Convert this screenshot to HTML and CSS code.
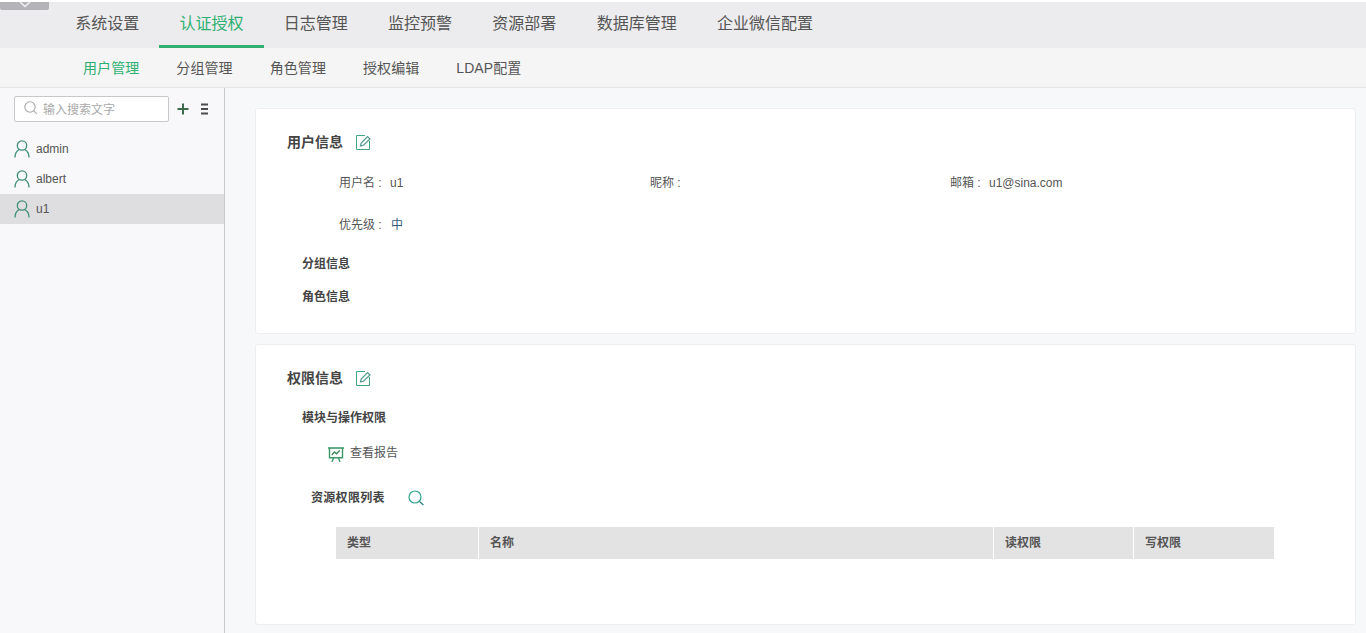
FILE: index.html
```html
<!DOCTYPE html>
<html lang="zh">
<head>
<meta charset="utf-8">
<title>用户管理</title>
<link rel="stylesheet" href="styles.css">
</head>
<body>
<svg class="defs" width="0" height="0">
  <defs>
    <symbol id="user" viewBox="0 0 16 18"><circle cx="8" cy="5.500" r="4.700" fill="none" stroke="#3f8f72" stroke-width="1.300"/><path d="M1 17.500c0-4 2-6.800 4.300-8M15 17.500c0-4-2-6.800-4.300-8" fill="none" stroke="#3f8f72" stroke-width="1.300"/></symbol>
    <symbol id="edit" viewBox="0 0 15 15"><path d="M9 .5H.5v14h13V6" fill="none" stroke="#3fa67e" stroke-width="1"/><path d="M4.500 11 5.200 8 11.500 1.500 14 4 7.500 10.300Z" fill="none" stroke="#4f9a8e" stroke-width="1.200"/></symbol>
  </defs>
</svg>
<div class="handle"><svg width="18" height="6" viewBox="0 0 18 6"><path d="M4 0 9 4.500 14 0" fill="none" stroke="#f0f0f0" stroke-width="1.500"/></svg></div>
<header class="topnav">
  <a class="tab">系统设置</a><a class="tab active">认证授权</a><a class="tab">日志管理</a><a class="tab">监控预警</a><a class="tab">资源部署</a><a class="tab">数据库管理</a><a class="tab">企业微信配置</a>
</header>
<nav class="subnav">
  <a class="sub active">用户管理</a><a class="sub">分组管理</a><a class="sub">角色管理</a><a class="sub">授权编辑</a><a class="sub">LDAP配置</a>
</nav>
<div class="body">
  <aside class="side">
    <div class="tools">
      <div class="search">
        <svg width="14" height="14" viewBox="0 0 14 14"><circle cx="6" cy="6" r="5.200" fill="none" stroke="#a9a9a9" stroke-width="1.100"/><path d="M9.800 9.800 12.800 12.800" stroke="#a9a9a9" stroke-width="1.100"/></svg>
        <span>输入搜索文字</span>
      </div>
      <svg class="plus" width="12" height="12" viewBox="0 0 12 12"><path d="M6 .5v11M.5 6h11" stroke="#3b6b4a" stroke-width="2"/></svg>
      <svg class="more" width="7" height="12" viewBox="0 0 7 12"><path d="M0 1.500h7M0 6h7M0 10.500h7" stroke="#4c4c4c" stroke-width="2.200"/></svg>
    </div>
    <ul class="users">
      <li><svg width="16" height="18"><use href="#user"/></svg>admin</li>
      <li><svg width="16" height="18"><use href="#user"/></svg>albert</li>
      <li class="sel"><svg width="16" height="18"><use href="#user"/></svg>u1</li>
    </ul>
  </aside>
  <main class="main">
    <section class="card one">
      <h2>用户信息<svg width="15" height="15"><use href="#edit"/></svg></h2>
      <div class="fields">
        <div class="f"><span class="k">用户名 :</span><span class="v">u1</span></div>
        <div class="f"><span class="k">昵称 :</span></div>
        <div class="f"><span class="k">邮箱 :</span><span class="v">u1@sina.com</span></div>
        <div class="f"><span class="k">优先级 :</span><span class="v blue">中</span></div>
      </div>
      <h3 class="g1">分组信息</h3>
      <h3 class="g2">角色信息</h3>
    </section>
    <section class="card two">
      <h2>权限信息<svg width="15" height="15"><use href="#edit"/></svg></h2>
      <h3 class="g3">模块与操作权限</h3>
      <div class="report">
        <svg width="16" height="15" viewBox="0 0 16 15"><path d="M0 1h16" stroke="#3c9a68" stroke-width="1.600"/><path d="M1.500 1v9.700h13V1" fill="none" stroke="#3c9a68" stroke-width="1.400"/><path d="M3.800 8 6.500 5 8.500 6.800 11.800 3.500" fill="none" stroke="#3c8a5c" stroke-width="1.300"/><path d="M5.500 11 4 15M10.500 11 12 15" stroke="#3c9a68" stroke-width="1.400"/></svg>
        <span>查看报告</span>
      </div>
      <div class="reslist"><h3>资源权限列表</h3><svg width="17" height="16" viewBox="0 0 17 16"><circle cx="7" cy="7" r="6" fill="none" stroke="#2fa58c" stroke-width="1.200"/><path d="M11.500 11.500 15.500 15" stroke="#2f7f86" stroke-width="1.200"/></svg></div>
      <div class="thead"><div class="c1">类型</div><div class="c2">名称</div><div class="c3">读权限</div><div class="c4">写权限</div></div>
    </section>
  </main>
</div>
</body>
</html>
```
FILE: styles.css
```css
* { box-sizing: border-box; }
html, body { margin: 0; height: 633px; overflow: hidden; }
body { font-family: "Liberation Sans", "Noto Sans CJK SC", sans-serif; color: #555; background: #f7f8fa; position: relative; }
.defs { position: absolute; }
.handle { position: absolute; left: 0; top: 2px; width: 49px; height: 8px; background: #b4b3b8; border-radius: 0 0 2px 2px; display: flex; justify-content: center; z-index: 2; }
.topnav { height: 48px; background: #ececee; padding-left: 55px; display: flex; border-top: 2px solid #fff; }
.tab { padding: 0 20.150px; line-height: 43px; font-size: 16px; color: #555; height: 46px; border-bottom: 3px solid transparent; white-space: nowrap; }
.tab.active { color: #2fb072; border-bottom-color: #2fb072; }
.subnav { height: 40px; background: #f5f5f6; border-bottom: 1px solid #e4e4e6; padding-left: 83px; display: flex; gap: 37px; }
.sub { font-size: 14px; letter-spacing: .08px; line-height: 40px; color: #555; }
.sub.active { color: #2fb072; }
.body { display: flex; height: 545px; }
.side { width: 225px; border-right: 1px solid #c9c9cc; background: #f8f8fb; padding-top: 8px; }
.tools { display: flex; align-items: center; padding-left: 14px; height: 26px; }
.search { width: 155px; height: 26px; border: 1px solid #c8c8c8; border-radius: 2px; background: #fff; display: flex; align-items: center; padding: 0 0 2px 9px; gap: 5px; font-size: 12px; color: #aaa; }
.plus { margin-left: 8px; }
.more { margin-left: 12px; }
.users { list-style: none; margin: 12px 0 0; padding: 0; }
.users li { height: 30px; display: flex; align-items: center; padding-left: 14px; gap: 6px; font-size: 12px; color: #555; }
.users li.sel { background: #dedee0; }
.main { flex: 1; padding: 20px 10px 0 30px; display: flex; flex-direction: column; gap: 10px; }
.card { background: #fff; border: 1px solid #eeeef0; border-radius: 3px; padding-left: 31px; }
.card.one { height: 226px; padding-top: 24px; }
.card.two { height: 281px; padding-top: 24px; }
h2 { margin: 0; font-size: 14px; line-height: 19px; color: #444; font-weight: bold; display: flex; align-items: center; gap: 13px; }
h3 { margin: 0; font-size: 12px; line-height: 18px; color: #444; font-weight: bold; }
.fields { display: grid; grid-template-columns: 311px 300px 1fr; padding: 22px 0 0 52px; row-gap: 24px; }
.f { font-size: 12px; line-height: 18px; color: #555; display: flex; }
.k { margin-right: 8.300px; }
.v { color: #555; }
.v.blue { color: #2f5f80; margin-left: 1px; }
.g1 { margin: 21px 0 0 15px; }
.g2 { margin: 15px 0 0 15px; }
.g3 { margin: 21px 0 0 15px; }
.report { display: flex; align-items: flex-start; gap: 6px; margin: 16px 0 0 41px; font-size: 12px; line-height: 18px; color: #555; }
.report svg { margin-top: 4px; }
.report span { margin-top: 1px; }
.reslist { display: flex; align-items: center; gap: 23px; margin: 25px 0 0 24px; height: 22px; }
.reslist h3 { letter-spacing: .3px; }
.thead { display: grid; grid-template-columns: 142px 514px 139px 140px; gap: 1px; margin: 18px 0 0 49px; width: 938px; }
.thead div { background: #e3e3e3; height: 32px; line-height: 32px; padding-left: 11px; font-size: 12px; font-weight: bold; color: #555; }
```
